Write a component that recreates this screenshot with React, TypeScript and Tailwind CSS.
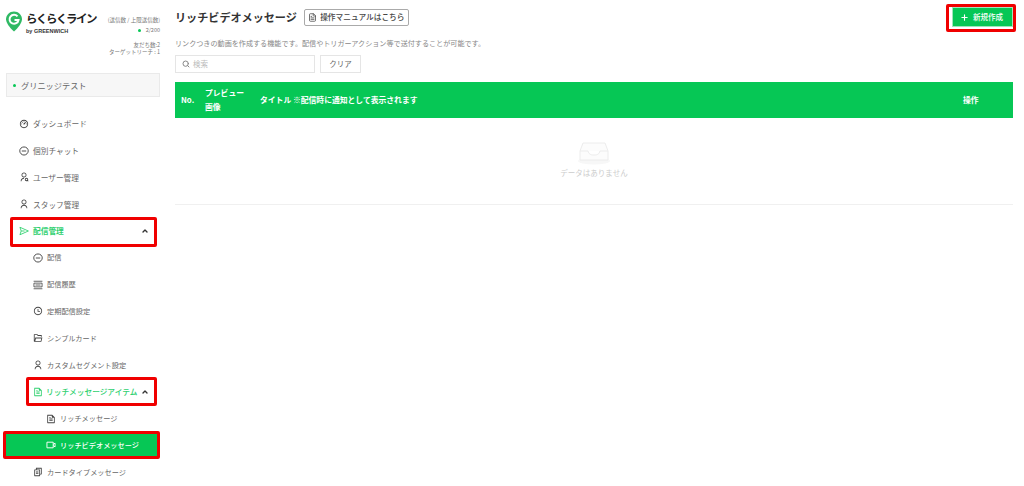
import { ChevronUp, Plus, Search, FileText } from 'lucide-react';
import { RiDashboard3Line, RiFileCopy2Line, RiFileTextLine, RiFolderOpenLine, RiTimeLine, RiUserLine, RiUserSearchLine } from 'react-icons/ri';
import type { ReactNode } from 'react';

const font = "font-['Noto_Sans_CJK_JP','Noto_Sans',sans-serif]";

function Highlight({ className }: { className: string }) {
  return <div className={`absolute pointer-events-none border-[3px] border-[#f00000] rounded-[2px] ${className}`} />;
}

function SendIcon() {
  return (
    <svg width="10" height="10" viewBox="0 0 16 16" fill="none" stroke="currentColor" strokeWidth="1.400" strokeLinejoin="round">
      <path d="M1.500 2L15 8 1.500 14l2-6zM3.500 8H9" />
    </svg>
  );
}

function HistoryIcon() {
  return (
    <svg width="10" height="10" viewBox="0 0 16 16" fill="none" stroke="currentColor" strokeWidth="1.300">
      <path d="M1 2h14M1 14h14M1.500 5h13v6h-13zM4 8h8" />
    </svg>
  );
}

function ChatIcon() {
  return (
    <svg width="10" height="10" viewBox="0 0 16 16" fill="none" stroke="currentColor" strokeWidth="1.500">
      <path d="M8 1.500c3.800 0 6.800 2.800 6.800 6.300S11.800 14.500 8 14.500 1.200 11.300 1.200 7.800 4.200 1.500 8 1.500zM4.500 8h7" />
    </svg>
  );
}

function VideoIcon() {
  return (
    <svg width="10" height="10" viewBox="0 0 16 16" fill="none" stroke="currentColor" strokeWidth="1.500" strokeLinejoin="round">
      <path d="M1.500 3.500h10v9h-10zM11.500 7l3-2v6l-3-2" />
    </svg>
  );
}

function Item({ icon, label, indent, size = 'text-[7.200px]' }: { icon: ReactNode; label: string; indent: string; size?: string }) {
  return (
    <div className={`relative flex items-center h-[26.800px] text-[#666] ${size} ${indent}`}>
      <span className="w-[14px] flex items-center shrink-0 text-[#444]">{icon}</span>
      <span className="whitespace-nowrap">{label}</span>
    </div>
  );
}

export default function App() {
  return (
    <div className={`flex h-[486px] w-[1024px] overflow-hidden bg-white ${font}`}>
      <aside className="w-[170px] shrink-0 relative">
        <div className="flex justify-between pl-[6px] pr-[10px] pt-[11px] h-[73px]">
          <div className="flex">
            <svg width="16" height="21" viewBox="0 0 16 21">
              <path d="M8 0.500C3.600 0.500 0 4 0 8.200c0 3.400 3.500 8.200 8 12.300 4.500-4.100 8-8.900 8-12.300C16 4 12.400 0.500 8 0.500z" fill="#2fb964" />
              <path d="M11.500 5.300A4.500 4.500 0 1 0 12.500 9H8.500" fill="none" stroke="#fff" strokeWidth="2" />
            </svg>
            <div className="ml-[4px]">
              <div className="text-[11.500px] leading-[15px] font-bold text-[#222] tracking-[-1.500px] whitespace-nowrap">らくらくライン</div>
              <div className="text-[5.500px] leading-[8px] mt-[1px] font-bold text-[#333] whitespace-nowrap font-['Liberation_Sans',sans-serif]">by GREENWICH</div>
            </div>
          </div>
          <div className="text-right text-[5.500px] text-[#777] leading-[7px] whitespace-nowrap pt-[5.500px]">
            <div>(送信数 / 上限送信数)</div>
            <div className="mt-[3px] mb-[8px] flex items-center justify-end">
              <span className="w-[3px] h-[3px] rounded-full bg-[#06c755] mr-[5px]" />2/200
            </div>
            <div>友だち数:2</div>
            <div className="mt-[0.500px]">ターゲットリーチ : 1</div>
          </div>
        </div>
        <div className="ml-[6px] mr-[10px] h-[24px] bg-[#f7f7f7] border border-[#eaeaea] flex items-center pl-[6px] text-[8.200px] text-[#666]">
          <span className="w-[3px] h-[3px] rounded-full bg-[#06c755] mr-[5px]" />グリニッジテスト
        </div>
        <nav className="mt-[13.500px]">
          <Item size="text-[7.700px]" indent="pl-[19px]" icon={<RiDashboard3Line size={10} />} label="ダッシュボード" />
          <Item size="text-[7.700px]" indent="pl-[19px]" icon={<ChatIcon />} label="個別チャット" />
          <Item size="text-[7.700px]" indent="pl-[19px]" icon={<RiUserSearchLine size={10} />} label="ユーザー管理" />
          <Item size="text-[7.700px]" indent="pl-[19px]" icon={<RiUserLine size={10} />} label="スタッフ管理" />
          <div className="relative flex items-center h-[26.800px] pl-[19px] text-[7.700px] font-bold text-[#2fd06f]">
            <span className="w-[14px] flex items-center"><SendIcon /></span>
            配信管理
            <ChevronUp size={8} strokeWidth={4} className="absolute left-[141px] text-[#333]" />
            <Highlight className="left-[10px] top-[-1px] w-[147px] h-[30px]" />
          </div>
          <Item indent="pl-[33px]" icon={<ChatIcon />} label="配信" />
          <Item indent="pl-[33px]" icon={<HistoryIcon />} label="配信履歴" />
          <Item indent="pl-[33px]" icon={<RiTimeLine size={10} />} label="定期配信設定" />
          <Item indent="pl-[33px]" icon={<RiFolderOpenLine size={10} />} label="シンプルカード" />
          <Item indent="pl-[33px]" icon={<RiUserLine size={10} />} label="カスタムセグメント設定" />
          <div className="relative flex items-center h-[26.800px] pl-[33px] text-[7.700px] font-medium text-[#2fd06f]">
            <span className="w-[13px] flex items-center"><RiFileTextLine size={10} /></span>
            リッチメッセージアイテム
            <ChevronUp size={8} strokeWidth={4} className="absolute left-[141px] text-[#333]" />
            <Highlight className="left-[26px] top-[-1px] w-[131px] h-[29px]" />
          </div>
          <Item indent="pl-[46px]" icon={<RiFileTextLine size={10} />} label="リッチメッセージ" />
          <div className="relative flex items-center h-[26.800px] pl-[46px] text-[7.200px] font-medium text-white">
            <div className="absolute left-[6px] top-[2px] w-[151px] h-[22px] bg-[#06c755]" />
            <span className="relative w-[14px] flex items-center"><VideoIcon /></span>
            <span className="relative">リッチビデオメッセージ</span>
            <Highlight className="left-[3px] top-[-1px] w-[157px] h-[28px]" />
          </div>
          <Item indent="pl-[33px]" icon={<RiFileCopy2Line size={10} />} label="カードタイプメッセージ" />
        </nav>
      </aside>

      <main className="flex-1 pl-[5px] pr-[11px] relative">
        <div className="flex items-center pt-[7px] h-[27px]">
          <h1 className="text-[11.100px] font-bold text-[#333] whitespace-nowrap">リッチビデオメッセージ</h1>
          <button className="ml-[7px] h-[17px] w-[105px] border border-[#aaa] rounded-[2px] flex items-center justify-center text-[7.700px] font-medium text-[#444] whitespace-nowrap">
            <FileText size={9} className="mr-[3px]" />操作マニュアルはこちら
          </button>
          <button className="ml-auto h-[20px] w-[61px] pr-[2px] bg-[#06c755] border border-[#9fe6bc] flex items-center justify-center text-[7.500px] font-medium text-white whitespace-nowrap">
            <Plus size={9} strokeWidth={3} className="mr-[4px]" />新規作成
          </button>
          <Highlight className="left-[776px] top-[4px] w-[70px] h-[28px]" />
        </div>
        <p className="mt-[10px] text-[7.100px] leading-[12px] text-[#888] whitespace-nowrap">リンクつきの動画を作成する機能です。配信やトリガーアクション等で送付することが可能です。</p>
        <div className="flex mt-[6px] gap-[5px]">
          <div className="w-[140px] h-[18px] border border-[#e5e5e5] flex items-center pl-[6px] text-[7.500px] text-[#bbb]">
            <Search size={8} strokeWidth={3} className="mr-[3px] text-[#888]" />検索
          </div>
          <button className="w-[41px] h-[18px] border border-[#e5e5e5] text-[7.500px] text-[#666]">クリア</button>
        </div>
        <div className="mt-[9px] h-[36px] bg-[#06c755] flex items-center text-[7.800px] font-bold text-white whitespace-nowrap">
          <span className="w-[30px] pl-[6px]">No.</span>
          <span className="w-[55px] leading-[14px]">プレビュー<br />画像</span>
          <span className="flex-1">タイトル ※配信時に通知として表示されます</span>
          <span className="w-[50px]">操作</span>
        </div>
        <div className="h-[87px] border-b border-[#f0f0f0] flex flex-col items-center pt-[23px]">
          <svg width="32" height="24" viewBox="0 0 32 24" fill="none">
            <ellipse cx="16" cy="20" rx="16" ry="3.500" fill="#f7f7f7" />
            <path d="M5 2h22l3 8v9H2v-9z" fill="#fcfcfc" stroke="#ececec" />
            <path d="M2 10h8c1 3 2 4 6 4s5-1 6-4h8" fill="#fff" stroke="#ececec" />
          </svg>
          <div className="mt-[2px] text-[7.500px] text-[#ccc]">データはありません</div>
        </div>
      </main>
    </div>
  );
}
